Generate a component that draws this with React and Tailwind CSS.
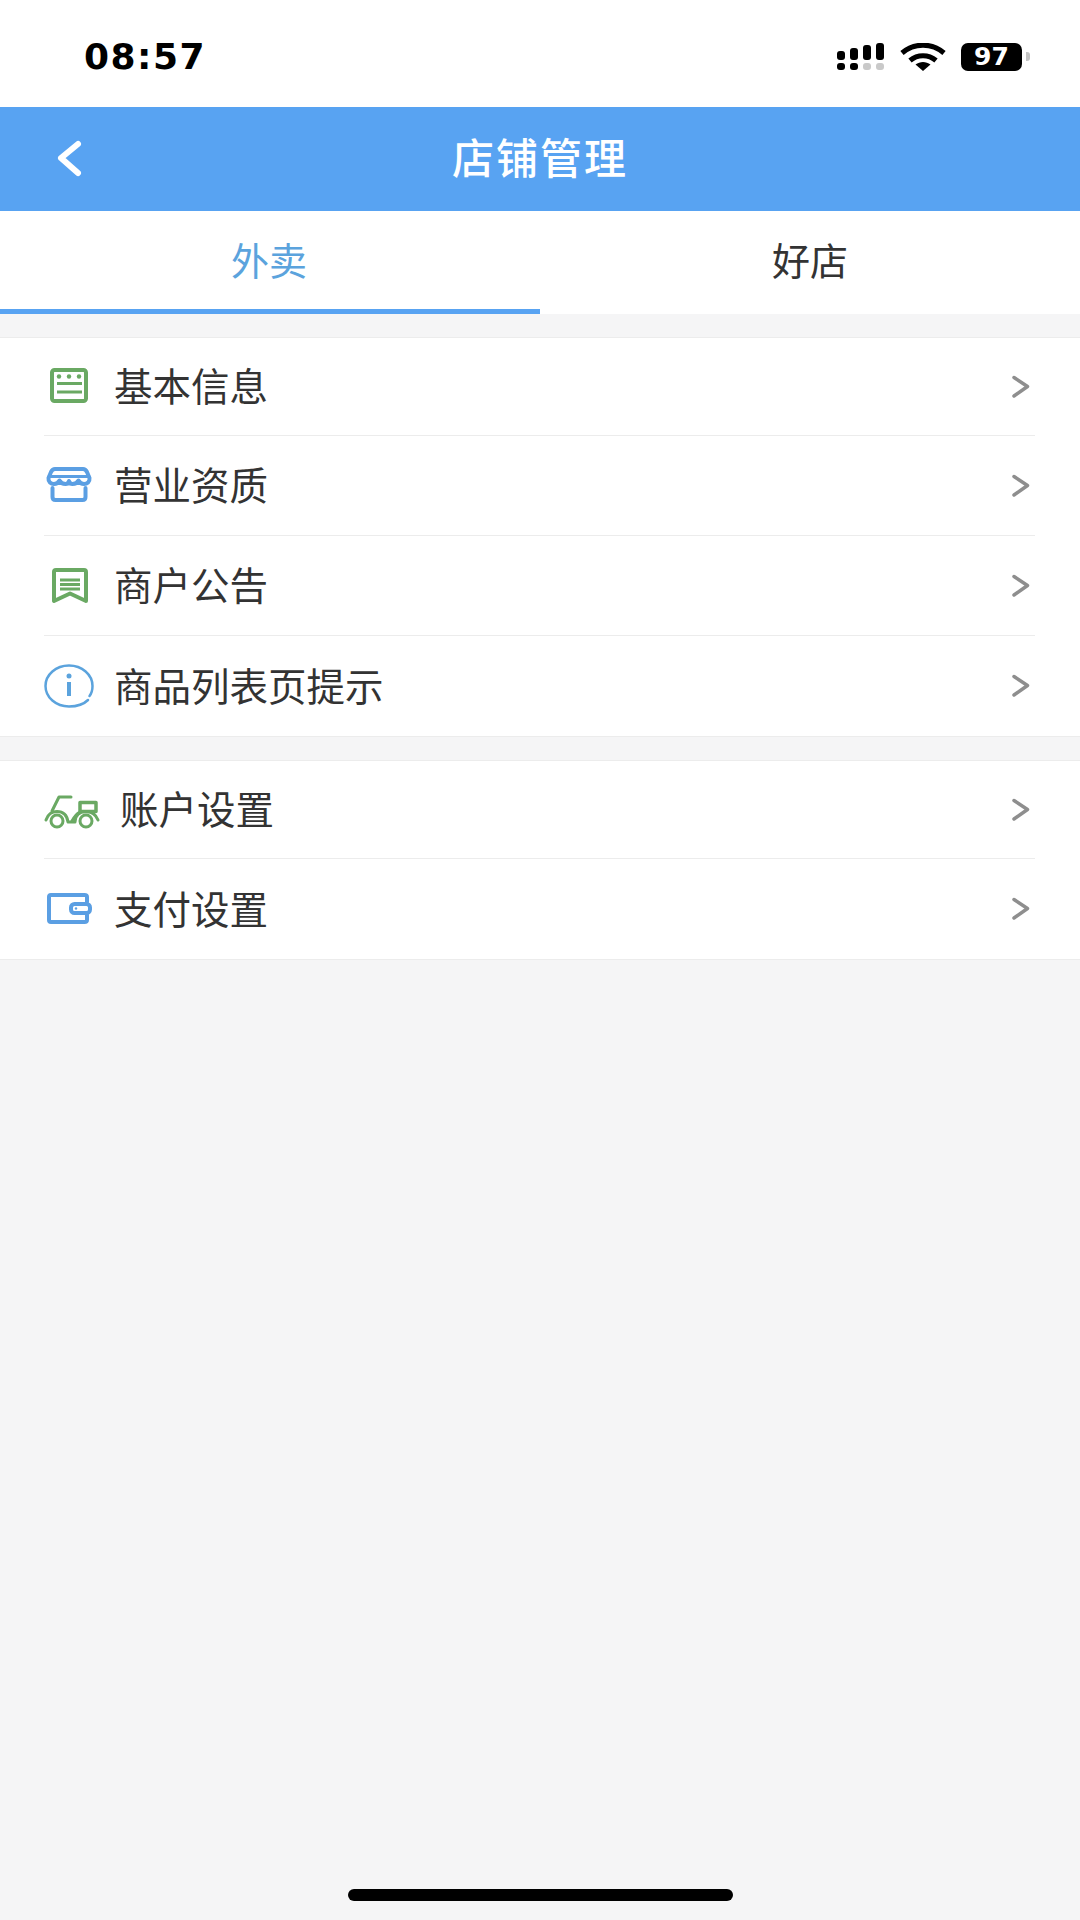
const G = "#6aa963";
const B = "#5b9fe3";

function Signal() {
  return (
    <svg width="47" height="27" viewBox="0 0 47 27" fill="#000">
      <rect x="0" y="8" width="8" height="9" rx="3" />
      <rect x="13" y="5" width="8" height="12" rx="3" />
      <rect x="26" y="2" width="8" height="15" rx="3" />
      <rect x="39" y="0" width="8" height="17" rx="3" />
      <rect x="0" y="20" width="8" height="7" rx="3" />
      <rect x="13" y="20" width="8" height="7" rx="3" />
      <rect x="26" y="20" width="8" height="7" rx="3" fill="#c9c9c9" />
      <rect x="39" y="20" width="8" height="7" rx="3" fill="#c9c9c9" />
    </svg>
  );
}

function Wifi() {
  return (
    <svg width="46" height="28" viewBox="0 0 46 28" fill="none" stroke="#000" strokeWidth="5">
      <path d="M2 10C14 -0.5 32 -0.5 44 10" />
      <path d="M10 17.500C17.500 11 28.500 11 36 17.500" />
      <path d="M15.500 21.500L23 28L30.500 21.500C26 18 20 18 15.500 21.500Z" fill="#000" stroke="none" />
    </svg>
  );
}

function IconInfo() {
  return (
    <svg width="70" height="50" viewBox="0 0 70 50" fill="none" stroke="#5ba3dd" strokeWidth="2.500" strokeLinecap="round">
      <path d="M44 39C40 43 33 45.500 25 45.500C12 45.500 1.500 36.500 1.500 25C1.500 13.500 12 4.500 25 4.500C38 4.500 48.500 13.500 48.500 25C48.500 29 47.500 32.500 45.500 35" />
      <circle cx="25" cy="15" r="2.500" fill="#5ba3dd" stroke="none" />
      <path d="M25 21V35" strokeWidth="4" strokeLinecap="butt" />
    </svg>
  );
}

function IconProfile() {
  return (
    <svg width="70" height="50" viewBox="0 0 70 50" fill="none" stroke={G} strokeWidth="4">
      <rect x="8" y="9" width="34" height="31" rx="2.500" />
      <circle cx="15" cy="15.500" r="2.200" fill={G} stroke="none" />
      <circle cx="25" cy="15.500" r="2.200" fill={G} stroke="none" />
      <circle cx="35" cy="15.500" r="2.200" fill={G} stroke="none" />
      <path d="M13 22.500H38" strokeWidth="3" />
      <path d="M13 31H38" strokeWidth="3" />
    </svg>
  );
}

function IconStore() {
  return (
    <svg width="70" height="50" viewBox="0 0 70 50" fill="none" stroke={B} strokeWidth="4" strokeLinejoin="round" strokeLinecap="round">
      <path d="M11 9H39C41 9 42 10 43 12L45.500 18C46 22 43 24 40 24C37 24 35.500 22.500 34.500 20.500C33.500 22.500 31 24 28.500 24C26.500 24 25.500 23 25 21C24.500 23 23.500 24 21.500 24C19 24 16.500 22.500 15.500 20.500C14.500 22.500 13 24 10 24C7 24 4 22 4.500 18L7 12C8 10 9 9 11 9Z" />
      <path d="M5 16.500H45" strokeWidth="3" />
      <path d="M8.500 28V37C8.500 39 9.500 40 11.500 40H38.500C40.500 40 41.500 39 41.500 37V28" />
    </svg>
  );
}

function IconNotice() {
  return (
    <svg width="70" height="50" viewBox="0 0 70 50" fill="none" stroke={G} strokeWidth="4" strokeLinejoin="round">
      <path d="M10 12C10 10.500 10.500 10 12 10H40C41.500 10 42 10.500 42 12V41L26 33.500L10 41Z" />
      <path d="M16 20H36M16 24.500H36M16 29H36" strokeWidth="3" />
    </svg>
  );
}

function IconScooter() {
  return (
    <svg width="76" height="50" viewBox="0 0 76 50" fill="none" stroke={G} strokeWidth="3" strokeLinecap="round" strokeLinejoin="round">
      <circle cx="13" cy="37" r="6" />
      <circle cx="42" cy="37" r="6" />
      <path d="M27 13H15L8 27" />
      <path d="M2 36C4 30 8 27.500 13 27.500C19 27.500 23 31 24 38H31C31 31 36 27.500 42 27.500C48 27.500 52 31 54 36" />
      <path d="M28 37C30 33 32 30 36 28" />
      <rect x="36" y="18.500" width="16" height="9" strokeWidth="3.500" />
    </svg>
  );
}

function IconWallet() {
  return (
    <svg width="70" height="50" viewBox="0 0 70 50" fill="none" stroke={B} strokeWidth="4" strokeLinejoin="round" strokeLinecap="round">
      <path d="M43 18V13C43 11.500 42 11 40.500 11H7C5.500 11 5 11.500 5 13V36C5 37.500 5.500 38 7 38H40.500C42 38 43 37.500 43 36V31" />
      <rect x="27" y="20" width="19" height="9" rx="3.500" fill="#fff" />
      <circle cx="32" cy="24.500" r="1.200" fill={B} stroke="none" />
    </svg>
  );
}

function Row({ icon, label, wide, last, first }) {
  return (
    <div className={`ml-11 mr-[45px] flex items-center ${first ? "h-[98px]" : "h-[100px]"} ${last ? "" : "border-b border-[#ececec]"}`}>
      <div className={`${wide ? "w-[76px]" : "w-[70px]"} shrink-0 flex items-center pb-[1px]`}>{icon}</div>
      <span className="flex-1 text-[38.500px] leading-none text-[#333333] pb-[4px]">{label}</span>
      <svg width="20" height="26" viewBox="0 0 20 26" fill="none" stroke="#8e8e8e" strokeWidth="3.500" strokeLinecap="round" strokeLinejoin="round" className="mr-[4px]">
        <path d="M3 3.500L16.500 12.500L3 22" />
      </svg>
    </div>
  );
}

export default function App() {
  return (
    <div
      className="w-[1080px] h-[1920px] bg-[#f5f5f6] flex flex-col overflow-hidden"
      style={{ fontFamily: '"Noto Sans CJK SC", "Noto Sans", sans-serif' }}
    >
      {/* status bar */}
      <div className="h-[107px] bg-white flex items-center pl-[84px] pr-[50px] pt-[6px]">
        <span className="flex-1 text-[36px] font-bold text-black tracking-[1.500px] leading-none font-['DejaVu_Sans',sans-serif]">08:57</span>
        <div className="flex items-center">
          <Signal />
          <div className="ml-4"><Wifi /></div>
          <div className="ml-[15px] w-[61px] h-[28px] bg-black rounded-[7px] flex items-center justify-center text-white text-[25px] font-bold leading-none font-['DejaVu_Sans',sans-serif]">97</div>
          <div className="ml-[4px] w-[4px] h-[9px] bg-[#c4c4c4] rounded-r-[3px]"></div>
        </div>
      </div>

      {/* header */}
      <div className="h-[104px] bg-[#58a3f2] flex items-center justify-center relative">
        <svg width="30" height="40" viewBox="0 0 30 40" fill="none" stroke="#fff" strokeWidth="6" strokeLinecap="round" strokeLinejoin="round" className="absolute left-[54px] top-[33px]">
          <path d="M24 4L7 18L24 33" />
        </svg>
        <span className="text-[42px] font-medium text-white leading-none tracking-[2px] pb-[6px]">店铺管理</span>
      </div>

      {/* tabs */}
      <div className="h-[103px] bg-white flex">
        <div className="w-[540px] flex items-center justify-center border-b-[5px] border-[#58a3f2] text-[#5ba3dd] text-[38px] leading-none pb-[2px] pr-[2px]">外卖</div>
        <div className="w-[540px] flex items-center justify-center pb-[7px] text-[#333333] text-[38px] leading-none">好店</div>
      </div>

      {/* section 1 */}
      <div className="mt-[23px] bg-white border-t border-b border-[#ececec]">
        <Row first icon={<IconProfile />} label="基本信息" />
        <Row icon={<IconStore />} label="营业资质" />
        <Row icon={<IconNotice />} label="商户公告" />
        <Row last icon={<IconInfo />} label="商品列表页提示" />
      </div>

      {/* section 2 */}
      <div className="mt-[23px] bg-white border-t border-b border-[#ececec]">
        <Row first wide icon={<IconScooter />} label="账户设置" />
        <Row last icon={<IconWallet />} label="支付设置" />
      </div>

      {/* home indicator */}
      <div className="mt-auto mb-[19px] mx-auto w-[385px] h-[12px] rounded-full bg-black"></div>
    </div>
  );
}
